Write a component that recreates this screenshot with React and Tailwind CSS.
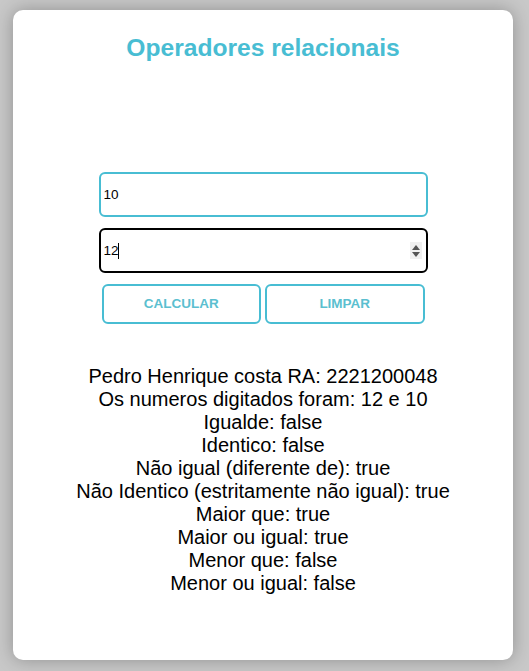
export default function App() {
  const lines = [
    'Pedro Henrique costa RA: 2221200048',
    'Os numeros digitados foram: 12 e 10',
    'Igualde: false',
    'Identico: false',
    'Não igual (diferente de): true',
    'Não Identico (estritamente não igual): true',
    'Maior que: true',
    'Maior ou igual: true',
    'Menor que: false',
    'Menor ou igual: false',
  ]

  return (
    <div className="min-h-[671px] bg-[#c8c8c8] pl-[13px] pt-[10px] font-['Liberation_Sans',Arial,sans-serif]">
      <div className="flex h-[650px] w-[500px] flex-col items-center rounded-[10px] bg-white pt-[24px] shadow-[0_0_18px_rgba(0,0,0,0.28)]">
        <h1 className="text-[24.6px] font-bold leading-[28px] text-[#48bdd3]">Operadores relacionais</h1>

        <div className="mt-[110px] flex w-[329px] flex-col gap-[11px]">
          <input
            type="text"
            defaultValue="10"
            className="h-[45px] w-full rounded-[6px] border-2 border-[#48bdd3] px-[3px] text-[13.5px] text-black outline-none"
          />
          <div className="relative">
            <input
              type="text"
              defaultValue="12"
              className="h-[45px] w-full rounded-[6px] border-2 border-black px-[3px] text-[13.5px] text-black outline-none"
            />
            <span className="absolute left-[19px] top-[15px] h-[16px] w-px bg-black" />
            <div className="absolute right-[6px] top-[14px] flex h-[17px] w-[12px] flex-col items-center justify-center gap-[2px] bg-[#f0f0f0]">
              <svg width="8" height="5" viewBox="0 0 8 5">
                <path d="M0 5 L4 0 L8 5 Z" fill="#555" />
              </svg>
              <svg width="8" height="5" viewBox="0 0 8 5">
                <path d="M0 0 L8 0 L4 5 Z" fill="#555" />
              </svg>
            </div>
          </div>
          <div className="flex gap-[4px] px-[3px]">
            <button
              type="button"
              className="h-[40px] w-[160px] rounded-[6px] border-2 border-[#48bdd3] bg-white text-[13.5px] font-bold text-[#5bbfd0]"
            >
              CALCULAR
            </button>
            <button
              type="button"
              className="h-[40px] w-[160px] rounded-[6px] border-2 border-[#48bdd3] bg-white text-[13.5px] font-bold text-[#5bbfd0]"
            >
              LIMPAR
            </button>
          </div>
        </div>

        <div className="mt-[41px] flex flex-col items-center text-[20px] leading-[23px] text-black">
          {lines.map((l) => (
            <p key={l}>{l}</p>
          ))}
        </div>
      </div>
    </div>
  )
}
